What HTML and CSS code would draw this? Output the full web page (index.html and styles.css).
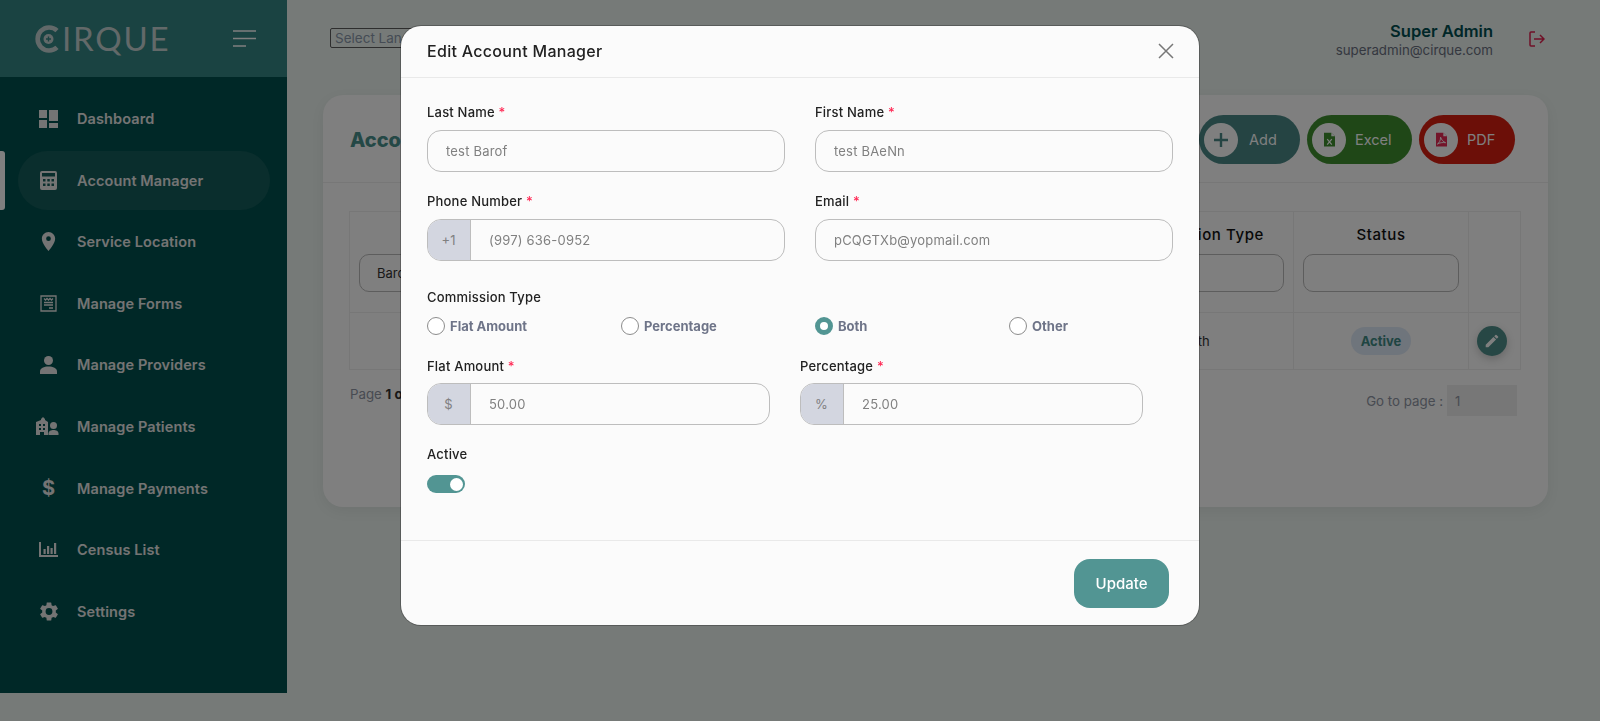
FILE: index.html
```html
<!DOCTYPE html>
<html lang="en">
<head>
    <meta charset="UTF-8">
    <title>Cirque - Account Manager</title>
    <link rel="stylesheet" href="styles.css">
</head>
<body>
    <div class="layout">
        <aside class="sidebar">
            <div class="sidebar-head">
                <div class="logo">
                    <svg class="logo-mark" viewBox="0 0 26 28" width="26" height="28">
                        <path d="M23 5.600A11.500 11.500 0 1 0 23 22.400" fill="none" stroke="currentColor" stroke-width="4.600"/>
                        <circle cx="14.500" cy="14" r="5" fill="currentColor"/>
                        <path d="M14.500 11.500v5M12 14h5" stroke="#348684" stroke-width="1.400"/>
                    </svg>
                    <span>IRQUE</span>
                </div>
                <svg class="burger" viewBox="0 0 23 17" width="23" height="17">
                    <path d="M0 1h23M0 8.500h23M0 16h13" stroke="currentColor" stroke-width="1.600"/>
                </svg>
            </div>
            <nav class="nav">
                <a class="nav-item">
                    <svg viewBox="0 0 19 18" width="19" height="18"><path d="M0 0h8v8H0zM10 0h9v11h-9zM0 10h8v8H0zM10 13h9v5h-9z" fill="currentColor"/></svg>
                    Dashboard
                </a>
                <a class="nav-item active">
                    <svg viewBox="0 0 17 19" width="17" height="19"><path fill-rule="evenodd" d="M2 0h13a2 2 0 0 1 2 2v15a2 2 0 0 1-2 2H2a2 2 0 0 1-2-2V2a2 2 0 0 1 2-2zm0 2v3.500h13V2zm1 6v2.500h2.500V8zm4.300 0v2.500h2.500V8zm4.200 0v2.500H14V8zM3 12.500V15h2.500v-2.500zm4.300 0V15h2.500v-2.500zm4.200 0V15H14v-2.500z" fill="currentColor"/></svg>
                    Account Manager
                </a>
                <a class="nav-item">
                    <svg viewBox="5 2 14 20" width="15" height="19"><path d="M12 2C8.130 2 5 5.130 5 9c0 5.250 7 13 7 13s7-7.750 7-13c0-3.870-3.130-7-7-7zm0 9.500a2.500 2.500 0 0 1 0-5 2.500 2.500 0 0 1 0 5z" fill="currentColor"/></svg>
                    Service Location
                </a>
                <a class="nav-item">
                    <svg viewBox="0 0 17 17" width="17" height="17"><path d="M1 1h15v15H1zM4 3.500l1.500 1.500L7 3.500 8.500 5 10 3.500 11.500 5 13 3.500M4 7.500h9M4 10h9M9 13h4" fill="none" stroke="currentColor" stroke-width="1.300"/></svg>
                    Manage Forms
                </a>
                <a class="nav-item">
                    <svg viewBox="0 0 17 18" width="17" height="18"><circle cx="8.500" cy="4.500" r="4.500" fill="currentColor"/><path d="M0 18v-2.500C0 12 4 10.500 8.500 10.500S17 12 17 15.500V18z" fill="currentColor"/></svg>
                    Manage Providers
                </a>
                <a class="nav-item">
                    <svg class="wide-icon" viewBox="0 0 23 18" width="23" height="18"><path fill-rule="evenodd" d="M0 18V5l5-2V2l2-2 2 2v1l3 2v13H8v-3H4v3zM3 7v2h2V7zm4 0v2h2V7zM3 11v2h2v-2zm4 0v2h2v-2z" fill="currentColor"/><circle cx="17.500" cy="8.500" r="3.500" fill="currentColor"/><path d="M12.500 18v-1.500c0-2.500 2.500-3.500 5-3.500s5 1 5 3.500V18z" fill="currentColor"/></svg>
                    Manage Patients
                </a>
                <a class="nav-item">
                    <span class="nav-glyph">$</span>
                    Manage Payments
                </a>
                <a class="nav-item">
                    <svg viewBox="0 0 19 15" width="19" height="15"><path d="M1 0v14h18" fill="none" stroke="currentColor" stroke-width="2"/><path d="M4.500 7h2.200v5H4.500zM8 4h2.200v8H8zM11.500 6h2.200v6h-2.200zM15 1h2.200v11H15z" fill="currentColor"/></svg>
                    Census List
                </a>
                <a class="nav-item">
                    <svg viewBox="2.500 2 19 20" width="18" height="19"><path d="M19.140 12.940c.04-.3.06-.61.06-.94 0-.32-.02-.64-.07-.94l2.030-1.580a.49.49 0 0 0 .12-.61l-1.920-3.320a.49.49 0 0 0-.59-.22l-2.390.96c-.5-.38-1.030-.7-1.620-.94l-.36-2.540a.48.48 0 0 0-.48-.41h-3.840c-.24 0-.43.17-.47.41l-.36 2.540c-.59.24-1.130.57-1.620.94l-2.390-.96c-.22-.08-.47 0-.59.22L2.740 8.870c-.12.21-.08.47.12.61l2.030 1.580c-.05.3-.09.63-.09.94s.02.64.07.94l-2.030 1.580a.49.49 0 0 0-.12.61l1.920 3.320c.12.22.37.29.59.22l2.390-.96c.5.38 1.030.7 1.620.94l.36 2.540c.05.24.24.41.48.41h3.840c.24 0 .44-.17.47-.41l.36-2.540c.59-.24 1.130-.56 1.620-.94l2.390.96c.22.08.47 0 .59-.22l1.920-3.320c.12-.22.07-.47-.12-.61l-2.010-1.580zM12 15.600A3.600 3.600 0 1 1 12 8.400a3.600 3.600 0 0 1 0 7.200z" fill="currentColor"/></svg>
                    Settings
                </a>
            </nav>
        </aside>

        <main class="content">
            <header class="topbar">
                <select class="lang-select">
                    <option>Select Language</option>
                </select>
                <div class="user">
                    <div class="user-name">Super Admin</div>
                    <div class="user-mail">superadmin@cirque.com</div>
                </div>
                <svg class="logout" viewBox="0 0 16 16" width="16" height="16">
                    <path d="M6 1H2a1 1 0 0 0-1 1v12a1 1 0 0 0 1 1h4M5 8h10M11 4l4 4-4 4" fill="none" stroke="currentColor" stroke-width="1.500"/>
                </svg>
            </header>

            <section class="card">
                <div class="card-head">
                    <h2>Account Manager</h2>
                    <div class="actions">
                        <button class="pill pill-add">
                            <span class="pill-icon">
                                <svg viewBox="0 0 14 14" width="14" height="14"><path d="M7 0v14M0 7h14" stroke="#4a8886" stroke-width="2.400"/></svg>
                            </span>
                            Add
                        </button>
                        <button class="pill pill-excel">
                            <span class="pill-icon">
                                <svg viewBox="0 0 12 15" width="11" height="15"><path d="M0 0h8l4 4v11H0z" fill="#3e8f2f"/><path d="M8 0l4 4H8z" fill="#fff"/><path d="M3.500 7l5 6M8.500 7l-5 6" stroke="#fff" stroke-width="1.300"/></svg>
                            </span>
                            Excel
                        </button>
                        <button class="pill pill-pdf">
                            <span class="pill-icon">
                                <svg viewBox="0 0 12 15" width="11" height="15"><path d="M0 0h8l4 4v11H0z" fill="#e62a55"/><path d="M8 0l4 4H8z" fill="#fff"/><path d="M5 5c0 4-1.500 6-3.500 7.500C4 11 7 10.500 10.500 11 8 10 6 8 5 5z" fill="none" stroke="#fff" stroke-width="1"/></svg>
                            </span>
                            PDF
                        </button>
                    </div>
                </div>
                <div class="card-body">
                    <table class="grid">
                        <colgroup>
                            <col class="col-wide">
                            <col class="col-wide">
                            <col class="col-wide">
                            <col>
                            <col class="col-type">
                            <col class="col-status">
                            <col class="col-edit">
                        </colgroup>
                        <thead>
                            <tr>
                                <th>Last Name<input class="filter" value="Barof"></th>
                                <th>First Name<input class="filter"></th>
                                <th>Phone Number<input class="filter"></th>
                                <th>Email<input class="filter"></th>
                                <th>Commission Type<input class="filter"></th>
                                <th>Status<input class="filter"></th>
                                <th></th>
                            </tr>
                        </thead>
                        <tbody>
                            <tr>
                                <td>test Barof</td>
                                <td>test BAeNn</td>
                                <td>(997) 636-0952</td>
                                <td>pCQGTXb@yopmail.com</td>
                                <td>Both</td>
                                <td><span class="badge">Active</span></td>
                                <td class="edit-cell">
                                    <button class="edit-btn">
                                        <svg viewBox="2 2 20 20" width="14" height="14"><path d="M3 17.250V21h3.750L17.810 9.940l-3.750-3.750L3 17.250zM20.710 7.040a1 1 0 0 0 0-1.410l-2.340-2.340a1 1 0 0 0-1.410 0l-1.830 1.830 3.750 3.750 1.830-1.830z" fill="currentColor"/></svg>
                                    </button>
                                </td>
                            </tr>
                        </tbody>
                    </table>
                    <div class="pager">
                        <span class="page-count">Page <b>1 of 1</b></span>
                        <span class="goto">Go to page : <input class="goto-input" value="1"></span>
                    </div>
                </div>
            </section>
        </main>
    </div>

    <!-- Edit modal -->
    <div class="backdrop">
        <div class="modal">
            <div class="modal-head">
                <h3>Edit Account Manager</h3>
                <svg class="modal-close" viewBox="0 0 16 16" width="16" height="16">
                    <path d="M1 1l14 14M15 1L1 15" stroke="currentColor" stroke-width="1.500"/>
                </svg>
            </div>
            <form class="modal-body">
                <div class="row-two">
                    <div>
                        <label class="field-label">Last Name <i>*</i></label>
                        <input class="field" value="test Barof">
                    </div>
                    <div>
                        <label class="field-label">First Name <i>*</i></label>
                        <input class="field" value="test BAeNn">
                    </div>
                    <div>
                        <label class="field-label">Phone Number <i>*</i></label>
                        <div class="group">
                            <span class="addon">+1</span>
                            <input value="(997) 636-0952">
                        </div>
                    </div>
                    <div>
                        <label class="field-label">Email <i>*</i></label>
                        <input class="field" value="pCQGTXb@yopmail.com">
                    </div>
                </div>

                <label class="field-label type-label">Commission Type</label>
                <div class="radios">
                    <span class="radio"><span class="dot"></span>Flat Amount</span>
                    <span class="radio"><span class="dot"></span>Percentage</span>
                    <span class="radio"><span class="dot on"></span>Both</span>
                    <span class="radio"><span class="dot"></span>Other</span>
                </div>

                <div class="row-amounts">
                    <div>
                        <label class="field-label">Flat Amount <i>*</i></label>
                        <div class="group">
                            <span class="addon">$</span>
                            <input value="50.00">
                        </div>
                    </div>
                    <div>
                        <label class="field-label">Percentage <i>*</i></label>
                        <div class="group">
                            <span class="addon">%</span>
                            <input value="25.00">
                        </div>
                    </div>
                </div>

                <label class="field-label active-label">Active</label>
                <span class="toggle"><span class="knob"></span></span>
            </form>
            <div class="modal-foot">
                <button class="update-btn">Update</button>
            </div>
        </div>
    </div>
</body>
</html>
```

FILE: styles.css
```css
/* General Styles */
* {
    box-sizing: border-box;
}

body {
    font-family: 'Inter', 'Liberation Sans', sans-serif;
    background-color: #ecf4f0;
    margin: 0;
    height: 721px;
    overflow: hidden;
    color: #333;
}

.layout {
    display: flex;
    align-items: flex-start;
}

/* Sidebar */
.sidebar {
    width: 287px;
    height: 693px;
    flex-shrink: 0;
    background-color: #00504e;
}

.sidebar-head {
    height: 77px;
    background-color: #348684;
    display: flex;
    align-items: center;
    justify-content: space-between;
    padding: 0 31px 0 34px;
    color: #fff;
}

.logo {
    display: flex;
    align-items: center;
    gap: 2px;
    font-family: 'Lato', sans-serif;
    font-size: 33px;
    letter-spacing: 1.8px;
    line-height: 1;
    color: #c4d2d2;
}

.logo-mark {
    flex-shrink: 0;
}

.nav {
    padding-top: 12px;
    display: flex;
    flex-direction: column;
    gap: 2.6px;
}

.nav-item {
    height: 59px;
    margin: 0 17px 0 18px;
    padding-left: 19px;
    display: grid;
    grid-template-columns: 23px 1fr;
    column-gap: 17px;
    align-items: center;
    justify-items: start;
    border-radius: 30px;
    color: #e8e8e8;
    font-size: 14.5px;
    font-weight: 600;
    letter-spacing: 0.1px;
}

.nav-item svg,
.nav-glyph {
    justify-self: center;
}

.nav-item .wide-icon {
    margin-left: -2px;
}

.nav-glyph {
    font-size: 20px;
    font-weight: 700;
    line-height: 1;
}

.nav-item.active {
    background-color: #145c5a;
    position: relative;
}

.nav-item.active::before {
    content: '';
    position: absolute;
    left: -18px;
    top: 0;
    width: 5px;
    height: 59px;
    border-radius: 0 3px 3px 0;
    background-color: #fff;
}

/* Top bar */
.content {
    flex: 1;
    padding: 0 52px 0 36px;
}

.topbar {
    height: 95px;
    display: flex;
    align-items: flex-start;
    padding: 28px 0 0 7px;
}

.lang-select {
    width: 160px;
    height: 20px;
    font-family: 'Inter', sans-serif;
    font-size: 13.5px;
    color: #8a98aa;
    background: transparent;
    border: 1px solid #5c5c5c;
    border-radius: 2px;
}

.user {
    margin-left: auto;
    text-align: right;
    margin-top: -9px;
}

.user-name {
    font-size: 16.5px;
    font-weight: 600;
    line-height: 24px;
    color: #004e50;
}

.user-mail {
    font-size: 13.3px;
    line-height: 15px;
    color: #6a7080;
}

.logout {
    margin: 3px 3px 0 36px;
    color: #e0204f;
}

/* Card */
.card {
    height: 412px;
    background-color: #fefefe;
    border-radius: 20px;
    box-shadow: 0 4px 14px rgba(0, 0, 0, 0.06);
}

.card-head {
    height: 88px;
    border-bottom: 1px solid #eeeeee;
    display: flex;
    align-items: center;
    justify-content: space-between;
    padding: 2px 33px 0 27px;
}

.card-head h2 {
    margin: 0;
    font-size: 20px;
    font-weight: 800;
    color: #48908c;
}

.actions {
    display: flex;
    gap: 7px;
}

.pill {
    height: 49px;
    border: none;
    border-radius: 25px;
    padding: 0 0 0 5px;
    display: flex;
    align-items: center;
    gap: 9px;
    color: #fff;
    font-family: 'Inter', sans-serif;
    font-size: 14.5px;
}

.pill-add {
    width: 101px;
    background-color: #4a8886;
    gap: 11px;
}

.pill-excel {
    width: 105px;
    background-color: #3e8f2f;
}

.pill-pdf {
    width: 96px;
    background-color: #d81e10;
}

.pill-icon {
    width: 34px;
    height: 34px;
    flex-shrink: 0;
    border-radius: 50%;
    background-color: #fff;
    display: flex;
    align-items: center;
    justify-content: center;
}

.card-body {
    padding: 28px 26px 0 27px;
}

/* Table */
.grid {
    width: 1172px;
    margin-left: -1px;
    border-collapse: collapse;
    table-layout: fixed;
    font-size: 13px;
}

.grid th,
.grid td {
    border: 1px solid #eeeeee;
    text-align: center;
}

.grid th {
    height: 101px;
    padding: 14px 9px 0;
    vertical-align: top;
    font-size: 15px;
    line-height: 18px;
    font-weight: 500;
    letter-spacing: 0.6px;
    color: #111;
    white-space: nowrap;
}

.grid td {
    height: 57px;
    color: #333;
}

.col-wide {
    width: 200px;
}

.col-type {
    width: 196px;
}

.col-status {
    width: 175px;
}

.col-edit {
    width: 52px;
}

.filter {
    display: block;
    width: 100%;
    height: 38px;
    margin-top: 10px;
    padding: 0 17px;
    font-family: 'Inter', sans-serif;
    font-size: 13px;
    color: #333;
    background: transparent;
    border: 1px solid #bbb;
    border-radius: 10px;
}

.badge {
    display: inline-block;
    width: 60px;
    line-height: 28px;
    border-radius: 14px;
    background-color: #dfeaf8;
    color: #3f8a85;
    font-size: 13px;
    font-weight: 700;
}

.grid .edit-cell {
    padding-right: 6px;
}

.edit-btn {
    width: 30px;
    height: 30px;
    padding: 0;
    border: none;
    border-radius: 50%;
    background-color: #4e8f8a;
    color: #fff;
    box-shadow: 0 3px 8px rgba(0, 0, 0, 0.2);
    display: inline-flex;
    align-items: center;
    justify-content: center;
    vertical-align: middle;
}

.pager {
    display: flex;
    justify-content: space-between;
    align-items: flex-start;
    margin-top: 15px;
    font-size: 13.3px;
    color: #9096a4;
}

.page-count {
    line-height: 18px;
}

.pager b {
    color: #333;
}

.goto {
    display: flex;
    align-items: center;
    gap: 4px;
    margin-right: 5px;
    font-size: 13.3px;
}

.goto-input {
    width: 70px;
    height: 31px;
    padding: 0 8px;
    border: none;
    background-color: #eeeeee;
    font-family: 'Inter', sans-serif;
    font-size: 13px;
    color: #9096a4;
}

/* Modal */
.backdrop {
    position: fixed;
    inset: 0;
    background-color: rgba(0, 0, 0, 0.5);
    display: flex;
    justify-content: center;
    align-items: flex-start;
    padding-top: 26px;
}

.modal {
    width: 798px;
    height: 599px;
    background-color: #fbfbfb;
    border-radius: 20px;
    display: flex;
    flex-direction: column;
    box-shadow: 0 0 0 1px rgba(0, 0, 0, 0.25);
}

.modal-head {
    height: 52px;
    flex-shrink: 0;
    border-bottom: 1px solid #e9e9e9;
    display: flex;
    align-items: center;
    justify-content: space-between;
    padding: 0 25px 2px 26px;
}

.modal-head h3 {
    margin: 0;
    font-size: 16px;
    font-weight: 500;
    letter-spacing: 0.3px;
    color: #222;
}

.modal-close {
    color: #777;
}

.modal-body {
    flex: 1;
    padding: 24px 26px 0;
}

.row-two {
    display: grid;
    grid-template-columns: 358px 358px;
    column-gap: 30px;
    row-gap: 19px;
}

.row-amounts {
    display: grid;
    grid-template-columns: 343px 343px;
    column-gap: 30px;
    margin-top: 21px;
}

.field-label {
    display: block;
    height: 20px;
    line-height: 20px;
    margin-bottom: 8px;
    font-size: 13px;
    font-weight: 500;
    letter-spacing: 0.2px;
    color: #222;
}

.row-amounts .field-label {
    margin-bottom: 7px;
}

.field-label i {
    color: #ff2a55;
    font-style: normal;
}

.type-label {
    margin: 26px 0 10px;
}

.active-label {
    margin: 19px 0 11px;
}

.field,
.group {
    width: 100%;
    height: 42px;
    border: 1px solid #bdbdbd;
    border-radius: 14px;
}

.field {
    display: block;
    padding: 0 18px 1px;
    background: transparent;
    font-family: 'Inter', sans-serif;
    font-size: 13px;
    letter-spacing: 0.2px;
    color: #808080;
}

.group {
    display: flex;
    overflow: hidden;
}

.addon {
    width: 44px;
    flex-shrink: 0;
    margin: -1px 0 -1px -1px;
    border-right: 1px solid #bdbdbd;
    background-color: #d3d6e0;
    color: #808080;
    font-size: 13px;
    display: flex;
    align-items: center;
    justify-content: center;
}

.group input {
    flex: 1;
    min-width: 0;
    padding: 0 18px 1px;
    border: none;
    background: transparent;
    font-family: 'Inter', sans-serif;
    font-size: 13px;
    letter-spacing: 0.2px;
    color: #808080;
}

.radios {
    display: grid;
    grid-template-columns: repeat(4, 194px);
    height: 18px;
}

.radio {
    display: flex;
    align-items: center;
    gap: 5px;
    font-size: 13px;
    font-weight: 700;
    color: #6e7488;
}

.dot {
    width: 18px;
    height: 18px;
    border: 1px solid #8c8c8c;
    border-radius: 50%;
    background-color: #fff;
}

.dot.on {
    border: 5px solid #529593;
}

.toggle {
    display: flex;
    justify-content: flex-end;
    align-items: center;
    width: 38px;
    height: 18px;
    padding-right: 2px;
    border-radius: 9px;
    background-color: #529593;
}

.knob {
    width: 13px;
    height: 13px;
    border-radius: 50%;
    background-color: #fff;
}

.modal-foot {
    height: 85px;
    flex-shrink: 0;
    border-top: 1px solid #e9e9e9;
    display: flex;
    justify-content: flex-end;
    padding: 18px 30px 0 0;
}

.update-btn {
    width: 95px;
    height: 49px;
    border: none;
    border-radius: 16px;
    background-color: #529593;
    color: #fff;
    font-family: 'Inter', sans-serif;
    font-size: 15px;
    font-weight: 500;
}
```
